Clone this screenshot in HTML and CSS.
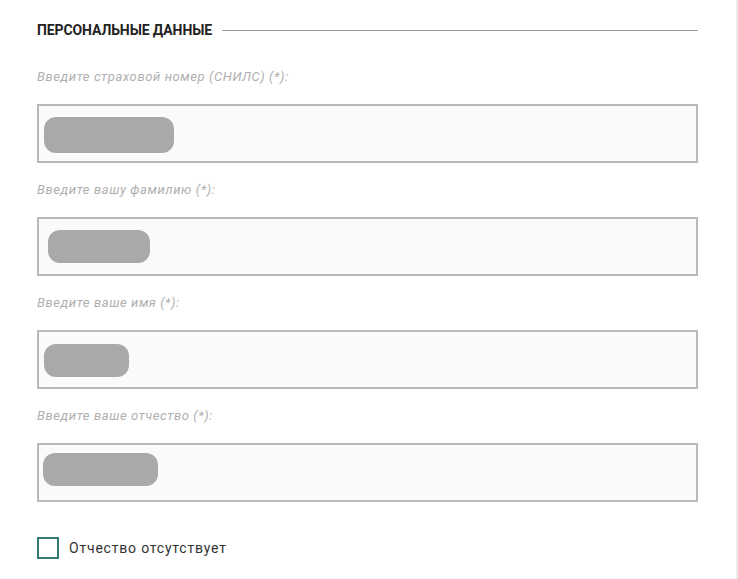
FILE: index.html
```html
<!DOCTYPE html>
<html lang="ru">
<head>
<meta charset="utf-8">
<title>Персональные данные</title>
<link rel="stylesheet" href="styles.css">
</head>
<body>
<div class="page">
  <section class="form">
    <div class="section-head">
      <h2 class="section-title">ПЕРСОНАЛЬНЫЕ ДАННЫЕ</h2>
      <span class="section-rule"></span>
    </div>

    <div class="field field-first">
      <div class="field-label">Введите страховой номер (СНИЛС) (*):</div>
      <div class="field-box"><span class="blur blur-1"></span></div>
    </div>

    <div class="field">
      <div class="field-label">Введите вашу фамилию (*):</div>
      <div class="field-box"><span class="blur blur-2"></span></div>
    </div>

    <div class="field">
      <div class="field-label">Введите ваше имя (*):</div>
      <div class="field-box"><span class="blur blur-3"></span></div>
    </div>

    <div class="field">
      <div class="field-label">Введите ваше отчество (*):</div>
      <div class="field-box"><span class="blur blur-4"></span></div>
    </div>

    <label class="check">
      <span class="check-box"></span>
      <span class="check-text">Отчество отсутствует</span>
    </label>
  </section>
</div>
</body>
</html>
```

FILE: styles.css
```css
* { box-sizing: border-box; }

html, body {
  margin: 0;
  padding: 0;
  background: #ffffff;
}

body {
  font-family: Roboto, "Liberation Sans", Arial, sans-serif;
  color: #333333;
}

.page {
  width: 738px;
  height: 579px;
  border-right: 2px solid #ececec;
  padding: 22px 0 0 37px;
  overflow: hidden;
}

.form {
  width: 661px;
  display: flex;
  flex-direction: column;
}

.section-head {
  display: flex;
  align-items: center;
  gap: 10px;
  height: 16px;
}

.section-title {
  margin: 0;
  font-size: 14px;
  line-height: 16px;
  font-weight: 700;
  letter-spacing: -0.1px;
  color: #222222;
  white-space: nowrap;
}

.section-rule {
  flex: 1;
  height: 1px;
  background: #9a9a9a;
  margin-top: 1px;
}

.field {
  display: flex;
  flex-direction: column;
  gap: 19px;
  margin-top: 19px;
}

.field-first {
  margin-top: 31px;
}

.field-label {
  font-size: 13px;
  line-height: 16px;
  font-style: italic;
  letter-spacing: 0.6px;
  color: #afafaf;
}

.field-box {
  height: 59px;
  border: 2px solid #b9b9b9;
  background: #fafafa;
  display: flex;
  align-items: flex-start;
}

.blur {
  display: block;
  background: #a9a9a9;
  border-radius: 12px;
}

.blur-1 { width: 130px; height: 36px; margin: 11px 0 0 5px; }
.blur-2 { width: 102px; height: 33px; margin: 11px 0 0 9px; }
.blur-3 { width: 85px;  height: 33px; margin: 12px 0 0 5px; }
.blur-4 { width: 115px; height: 33px; margin: 8px 0 0 4px; }

.check {
  display: flex;
  align-items: center;
  gap: 10px;
  margin-top: 35px;
}

.check-box {
  width: 22px;
  height: 22px;
  border: 2px solid #2e7d6d;
  background: #ffffff;
}

.check-text {
  font-size: 14px;
  line-height: 16px;
  letter-spacing: 0.8px;
  color: #333333;
}
```
